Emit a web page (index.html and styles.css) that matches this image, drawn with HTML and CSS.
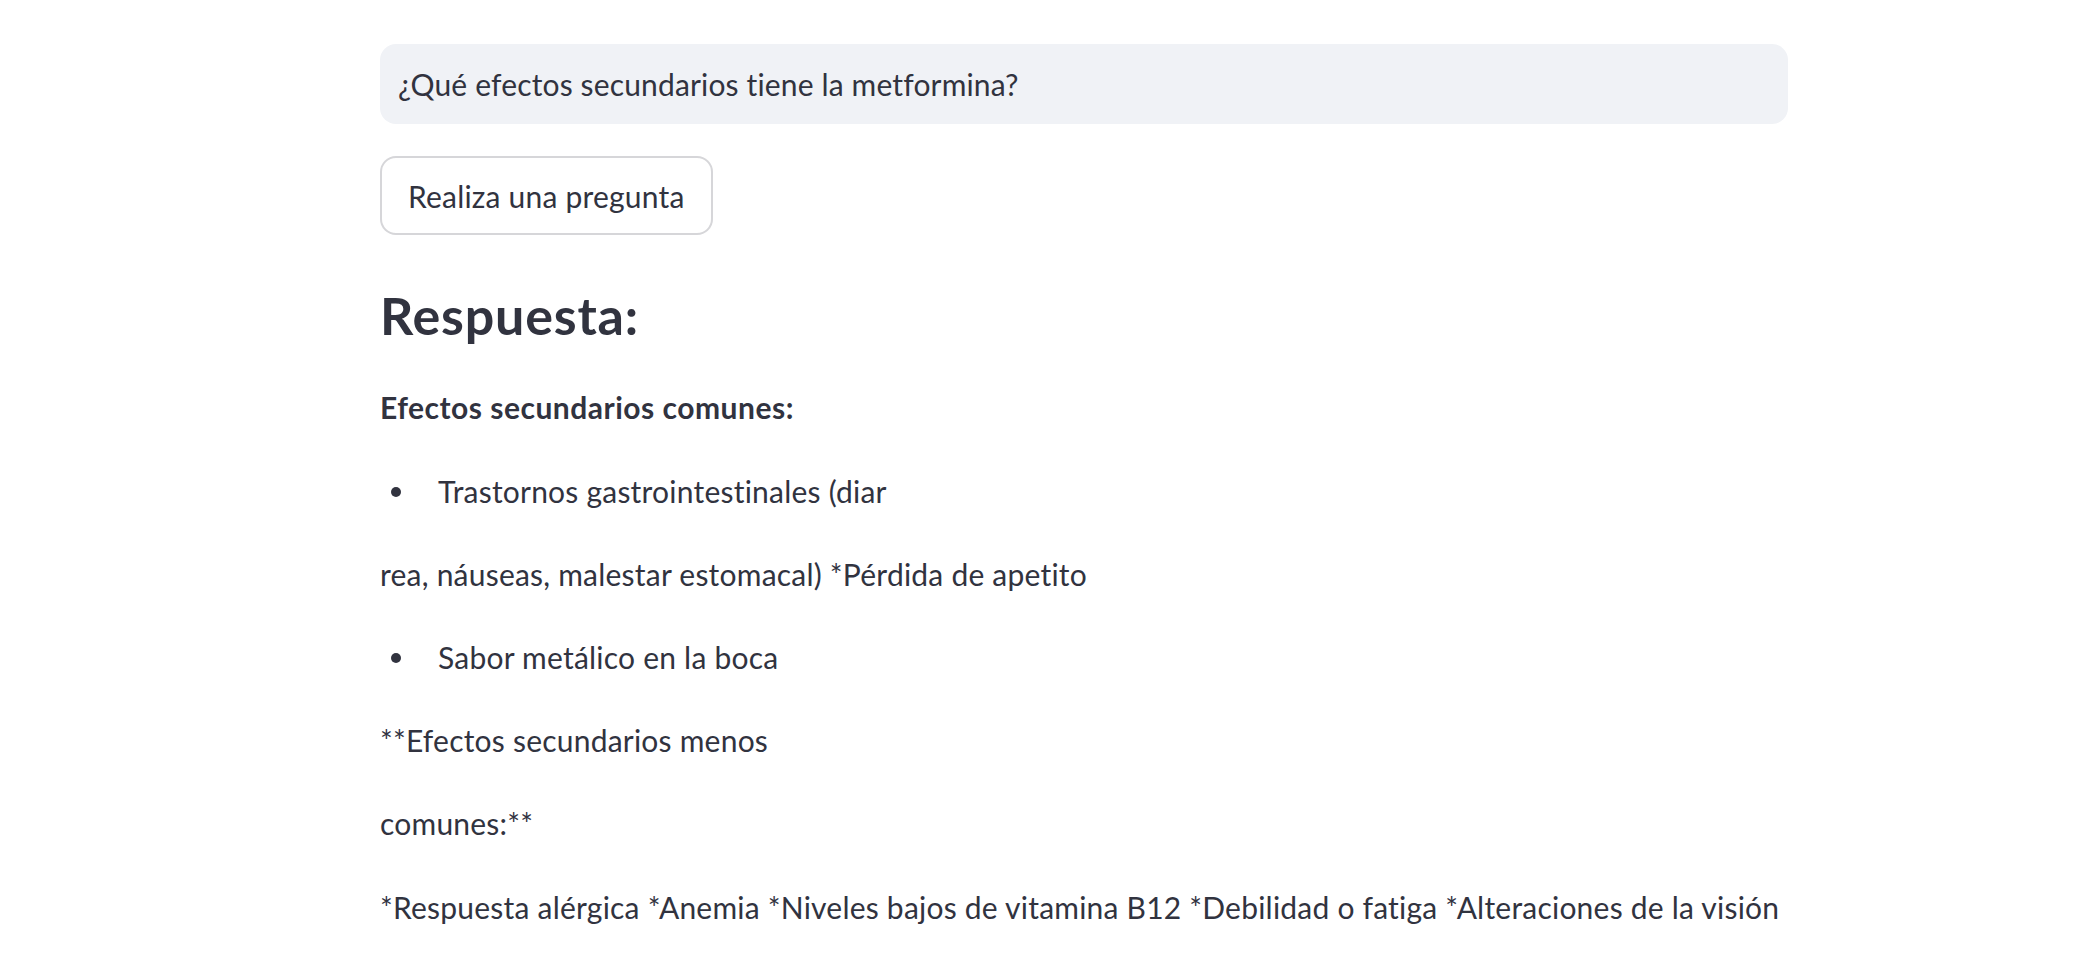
FILE: index.html
```html
<!DOCTYPE html>
<html lang="es">
<head>
<meta charset="utf-8">
<title>Pregunta</title>
<link rel="stylesheet" href="styles.css">
</head>
<body>
<main class="main">
  <div class="block">
    <div class="text-input">¿Qué efectos secundarios tiene la metformina?</div>
    <div class="btn-row"><button class="btn">Realiza una pregunta</button></div>
    <h3 class="answer-title">Respuesta:</h3>
    <div class="markdown">
      <p><strong>Efectos secundarios comunes:</strong></p>
      <ul>
        <li>Trastornos gastrointestinales (diar</li>
      </ul>
      <p>rea, náuseas, malestar estomacal) *Pérdida de apetito</p>
      <ul>
        <li>Sabor metálico en la boca</li>
      </ul>
      <p>**Efectos secundarios menos</p>
      <p>comunes:**</p>
      <p>*Respuesta alérgica *Anemia *Niveles bajos de vitamina B12 *Debilidad o fatiga *Alteraciones de la visión</p>
    </div>
  </div>
</main>
</body>
</html>
```
FILE: styles.css
```css
html, body {
  margin: 0;
  padding: 0;
  background: #ffffff;
}
body {
  font-family: Lato, "Noto Sans", sans-serif;
  color: #31333f;
}
.main {
  padding: 44px 0 40px 380px;
}
.block {
  width: 1408px;
  display: flex;
  flex-direction: column;
}
.text-input {
  height: 80px;
  background: #f0f2f6;
  border-radius: 16px;
  display: flex;
  align-items: center;
  padding: 0 18px;
  font-size: 30px;
  letter-spacing: 0.15px;
  box-sizing: border-box;
}
.btn-row {
  margin-top: 32px;
  display: flex;
}
.btn {
  height: 79px;
  padding: 0 26px;
  border: 2px solid rgba(49, 51, 63, 0.2);
  border-radius: 16px;
  background: #ffffff;
  color: #31333f;
  font-family: Lato, "Noto Sans", sans-serif;
  font-size: 30px;
  letter-spacing: 0.2px;
}
.answer-title {
  margin: 49px 0 0 0;
  font-size: 52px;
  line-height: 62.4px;
  font-weight: 700;
  letter-spacing: 0.8px;
}
.markdown {
  margin-top: 36px;
  font-size: 30px;
  line-height: 51.2px;
  letter-spacing: 0.22px;
}
.markdown p {
  margin: 0 0 32px 0;
}
.markdown strong {
  font-weight: 700;
  letter-spacing: 0.5px;
}
.markdown ul {
  margin: 0;
  padding: 0;
  list-style: none;
}
.markdown li {
  position: relative;
  padding-left: 58px;
  margin-bottom: 32px;
}
.markdown li::before {
  content: "";
  position: absolute;
  left: 11px;
  top: 21px;
  width: 10px;
  height: 10px;
  border-radius: 50%;
  background: #31333f;
}
```
